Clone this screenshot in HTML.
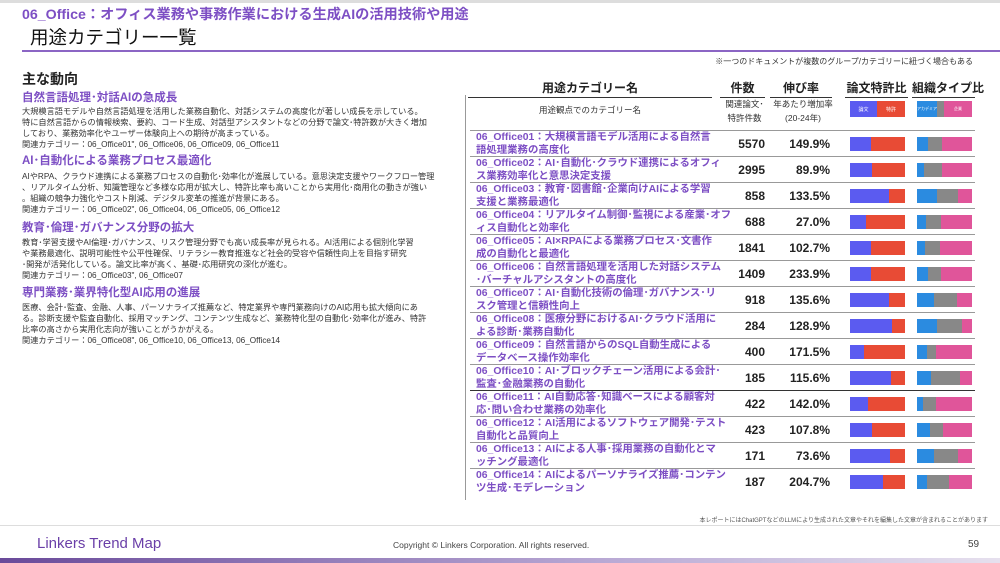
<!DOCTYPE html>
<html><head><meta charset="utf-8"><style>
*{margin:0;padding:0;box-sizing:border-box}
body{width:1000px;height:563px;position:relative;overflow:hidden;background:#fff;font-family:"Liberation Sans","Noto Sans CJK JP",sans-serif;color:#222}
.a{position:absolute;white-space:nowrap}
.pu{color:#7d4fc4}
.h3{font-size:11.5px;font-weight:bold;color:#7d4fc4}
.p{font-size:8.2px;line-height:11px;color:#333}
.row{position:absolute;left:470px;width:505px;height:26px;border-top:1px solid #999}
.nm{position:absolute;left:6px;top:1px;font-size:10.4px;line-height:12.5px;font-weight:bold;color:#7d4fc4;white-space:nowrap}
.num{position:absolute;left:245px;width:50px;text-align:right;top:6px;font-size:12px;font-weight:bold}
.pct{position:absolute;left:300px;width:60px;text-align:right;top:6px;font-size:12px;font-weight:bold}
.b1,.b2{position:absolute;top:6px;height:14px;width:55px;display:flex}
.b1{left:380px}.b2{left:447px}
.b1 i,.b2 i{display:block;height:100%}
.hd{position:absolute;top:79px;text-align:center;font-size:12px;font-weight:bold;border-bottom:1.5px solid #333;padding-bottom:1px;white-space:nowrap}
</style></head><body>
<div class="a" style="left:0;top:0;width:1000px;height:3px;background:#ddd"></div>
<div class="a pu" style="left:22px;top:4px;font-size:14.2px;font-weight:bold">06_Office：オフィス業務や事務作業における生成AIの活用技術や用途</div>
<div class="a" style="left:30px;top:24px;font-size:18.5px;color:#111">用途カテゴリー一覧</div>
<div class="a" style="left:22px;top:50px;width:978px;height:2px;background:#8b65c4"></div>
<div class="a" style="right:27px;top:56px;font-size:8px;color:#333">※一つのドキュメントが複数のグループ/カテゴリーに紐づく場合もある</div>

<div class="a" style="left:22px;top:69px;font-size:14px;font-weight:bold">主な動向</div>
<div class="a h3" style="left:22px;top:89px">自然言語処理･対話AIの急成長</div>
<div class="a p" style="left:22px;top:106px">大規模言語モデルや自然言語処理を活用した業務自動化、対話システムの高度化が著しい成長を示している。<br>特に自然言語からの情報検索、要約、コード生成、対話型アシスタントなどの分野で論文･特許数が大きく増加<br>しており、業務効率化やユーザー体験向上への期待が高まっている。<br>関連カテゴリー：06_Office01", 06_Office06, 06_Office09, 06_Office11</div>
<div class="a h3" style="left:22px;top:152px">AI･自動化による業務プロセス最適化</div>
<div class="a p" style="left:22px;top:171px">AIやRPA、クラウド連携による業務プロセスの自動化･効率化が進展している。意思決定支援やワークフロー管理<br>、リアルタイム分析、知識管理など多様な応用が拡大し、特許比率も高いことから実用化･商用化の動きが強い<br>。組織の競争力強化やコスト削減、デジタル変革の推進が背景にある。<br>関連カテゴリー：06_Office02", 06_Office04, 06_Office05, 06_Office12</div>
<div class="a h3" style="left:22px;top:219px">教育･倫理･ガバナンス分野の拡大</div>
<div class="a p" style="left:22px;top:237px">教育･学習支援やAI倫理･ガバナンス、リスク管理分野でも高い成長率が見られる。AI活用による個別化学習<br>や業務最適化、説明可能性や公平性確保、リテラシー教育推進など社会的受容や信頼性向上を目指す研究<br>･開発が活発化している。論文比率が高く、基礎･応用研究の深化が進む。<br>関連カテゴリー：06_Office03", 06_Office07</div>
<div class="a h3" style="left:22px;top:284px">専門業務･業界特化型AI応用の進展</div>
<div class="a p" style="left:22px;top:302px">医療、会計･監査、金融、人事、パーソナライズ推薦など、特定業界や専門業務向けのAI応用も拡大傾向にあ<br>る。診断支援や監査自動化、採用マッチング、コンテンツ生成など、業務特化型の自動化･効率化が進み、特許<br>比率の高さから実用化志向が強いことがうかがえる。<br>関連カテゴリー：06_Office08", 06_Office10, 06_Office13, 06_Office14</div>

<div class="a" style="left:465px;top:95px;width:1px;height:405px;background:#999"></div>

<div class="hd" style="left:468px;width:244px">用途カテゴリー名</div>
<div class="hd" style="left:720px;width:45px">件数</div>
<div class="hd" style="left:770px;width:62px">伸び率</div>
<div class="hd" style="left:845px;width:63px">論文特許比</div>
<div class="hd" style="left:912px;width:63px">組織タイプ比</div>
<div class="a" style="left:468px;top:104px;width:244px;text-align:center;font-size:8.5px;color:#333">用途観点でのカテゴリー名</div>
<div class="a" style="left:722px;top:97px;width:45px;text-align:center;font-size:8.5px;line-height:14px;color:#333">関連論文･<br>特許件数</div>
<div class="a" style="left:772px;top:97px;width:62px;text-align:center;font-size:8.5px;line-height:14px;color:#333">年あたり増加率<br>(20-24年)</div>
<div class="a" style="left:850px;top:101px;width:55px;height:16px;display:flex;font-size:5px;color:#fff;align-items:center"><span style="background:#5b5bf0;width:27px;height:100%;display:flex;align-items:center;justify-content:center">論文</span><span style="background:#e84b35;width:28px;height:100%;display:flex;align-items:center;justify-content:center">特許</span></div>
<div class="a" style="left:917px;top:101px;width:55px;height:16px;display:flex;font-size:4px;color:#fff"><span style="background:#2b8be0;width:20px;display:flex;align-items:center;justify-content:center">アカデミア</span><span style="background:#888;width:7px"></span><span style="background:#e0559a;width:28px;display:flex;align-items:center;justify-content:center">企業</span></div>

<div class="row" style="top:130px"><div class="nm">06_Office01：大規模言語モデル活用による自然言<br>語処理業務の高度化</div><div class="num">5570</div><div class="pct">149.9%</div><div class="b1"><i style="width:21px;background:#5b5bf0"></i><i style="flex:1;background:#e84b35"></i></div><div class="b2"><i style="width:11px;background:#2b8be0"></i><i style="width:14px;background:#888"></i><i style="flex:1;background:#e0559a"></i></div></div>
<div class="row" style="top:156px"><div class="nm">06_Office02：AI･自動化･クラウド連携によるオフィ<br>ス業務効率化と意思決定支援</div><div class="num">2995</div><div class="pct">89.9%</div><div class="b1"><i style="width:22px;background:#5b5bf0"></i><i style="flex:1;background:#e84b35"></i></div><div class="b2"><i style="width:7px;background:#2b8be0"></i><i style="width:18px;background:#888"></i><i style="flex:1;background:#e0559a"></i></div></div>
<div class="row" style="top:182px"><div class="nm">06_Office03：教育･図書館･企業向けAIによる学習<br>支援と業務最適化</div><div class="num">858</div><div class="pct">133.5%</div><div class="b1"><i style="width:39px;background:#5b5bf0"></i><i style="flex:1;background:#e84b35"></i></div><div class="b2"><i style="width:20px;background:#2b8be0"></i><i style="width:21px;background:#888"></i><i style="flex:1;background:#e0559a"></i></div></div>
<div class="row" style="top:208px"><div class="nm">06_Office04：リアルタイム制御･監視による産業･オフ<br>ィス自動化と効率化</div><div class="num">688</div><div class="pct">27.0%</div><div class="b1"><i style="width:16px;background:#5b5bf0"></i><i style="flex:1;background:#e84b35"></i></div><div class="b2"><i style="width:9px;background:#2b8be0"></i><i style="width:15px;background:#888"></i><i style="flex:1;background:#e0559a"></i></div></div>
<div class="row" style="top:234px"><div class="nm">06_Office05：AI×RPAによる業務プロセス･文書作<br>成の自動化と最適化</div><div class="num">1841</div><div class="pct">102.7%</div><div class="b1"><i style="width:21px;background:#5b5bf0"></i><i style="flex:1;background:#e84b35"></i></div><div class="b2"><i style="width:8px;background:#2b8be0"></i><i style="width:15px;background:#888"></i><i style="flex:1;background:#e0559a"></i></div></div>
<div class="row" style="top:260px"><div class="nm">06_Office06：自然言語処理を活用した対話システム<br>･バーチャルアシスタントの高度化</div><div class="num">1409</div><div class="pct">233.9%</div><div class="b1"><i style="width:21px;background:#5b5bf0"></i><i style="flex:1;background:#e84b35"></i></div><div class="b2"><i style="width:11px;background:#2b8be0"></i><i style="width:13px;background:#888"></i><i style="flex:1;background:#e0559a"></i></div></div>
<div class="row" style="top:286px"><div class="nm">06_Office07：AI･自動化技術の倫理･ガバナンス･リ<br>スク管理と信頼性向上</div><div class="num">918</div><div class="pct">135.6%</div><div class="b1"><i style="width:39px;background:#5b5bf0"></i><i style="flex:1;background:#e84b35"></i></div><div class="b2"><i style="width:17px;background:#2b8be0"></i><i style="width:23px;background:#888"></i><i style="flex:1;background:#e0559a"></i></div></div>
<div class="row" style="top:312px"><div class="nm">06_Office08：医療分野におけるAI･クラウド活用に<br>よる診断･業務自動化</div><div class="num">284</div><div class="pct">128.9%</div><div class="b1"><i style="width:42px;background:#5b5bf0"></i><i style="flex:1;background:#e84b35"></i></div><div class="b2"><i style="width:20px;background:#2b8be0"></i><i style="width:25px;background:#888"></i><i style="flex:1;background:#e0559a"></i></div></div>
<div class="row" style="top:338px"><div class="nm">06_Office09：自然言語からのSQL自動生成による<br>データベース操作効率化</div><div class="num">400</div><div class="pct">171.5%</div><div class="b1"><i style="width:14px;background:#5b5bf0"></i><i style="flex:1;background:#e84b35"></i></div><div class="b2"><i style="width:10px;background:#2b8be0"></i><i style="width:9px;background:#888"></i><i style="flex:1;background:#e0559a"></i></div></div>
<div class="row" style="top:364px"><div class="nm">06_Office10：AI･ブロックチェーン活用による会計･<br>監査･金融業務の自動化</div><div class="num">185</div><div class="pct">115.6%</div><div class="b1"><i style="width:41px;background:#5b5bf0"></i><i style="flex:1;background:#e84b35"></i></div><div class="b2"><i style="width:14px;background:#2b8be0"></i><i style="width:29px;background:#888"></i><i style="flex:1;background:#e0559a"></i></div></div>
<div class="row" style="top:390px;border-top-color:#333"><div class="nm">06_Office11：AI自動応答･知識ベースによる顧客対<br>応･問い合わせ業務の効率化</div><div class="num">422</div><div class="pct">142.0%</div><div class="b1"><i style="width:18px;background:#5b5bf0"></i><i style="flex:1;background:#e84b35"></i></div><div class="b2"><i style="width:6px;background:#2b8be0"></i><i style="width:13px;background:#888"></i><i style="flex:1;background:#e0559a"></i></div></div>
<div class="row" style="top:416px"><div class="nm">06_Office12：AI活用によるソフトウェア開発･テスト<br>自動化と品質向上</div><div class="num">423</div><div class="pct">107.8%</div><div class="b1"><i style="width:22px;background:#5b5bf0"></i><i style="flex:1;background:#e84b35"></i></div><div class="b2"><i style="width:13px;background:#2b8be0"></i><i style="width:13px;background:#888"></i><i style="flex:1;background:#e0559a"></i></div></div>
<div class="row" style="top:442px"><div class="nm">06_Office13：AIによる人事･採用業務の自動化とマ<br>ッチング最適化</div><div class="num">171</div><div class="pct">73.6%</div><div class="b1"><i style="width:40px;background:#5b5bf0"></i><i style="flex:1;background:#e84b35"></i></div><div class="b2"><i style="width:17px;background:#2b8be0"></i><i style="width:24px;background:#888"></i><i style="flex:1;background:#e0559a"></i></div></div>
<div class="row" style="top:468px"><div class="nm">06_Office14：AIによるパーソナライズ推薦･コンテン<br>ツ生成･モデレーション</div><div class="num">187</div><div class="pct">204.7%</div><div class="b1"><i style="width:33px;background:#5b5bf0"></i><i style="flex:1;background:#e84b35"></i></div><div class="b2"><i style="width:10px;background:#2b8be0"></i><i style="width:22px;background:#888"></i><i style="flex:1;background:#e0559a"></i></div></div>

<div class="a" style="right:12px;top:515px;font-size:6px;color:#555">本レポートにはChatGPTなどのLLMにより生成された文章やそれを編集した文章が含まれることがあります</div>
<div class="a" style="left:0;top:525px;width:1000px;height:1px;background:#ddd"></div>
<div class="a" style="left:37px;top:535px;font-size:15px;color:#6a3fa8">Linkers Trend Map</div>
<div class="a" style="left:393px;top:540px;font-size:8.5px;color:#444">Copyright © Linkers Corporation. All rights reserved.</div>
<div class="a" style="left:968px;top:539px;font-size:10px;color:#444">59</div>
<div class="a" style="left:0;top:558px;width:1000px;height:5px;background:linear-gradient(90deg,#6a4a9a,#b8a8d4 60%,#e6e0ee)"></div>
</body></html>
